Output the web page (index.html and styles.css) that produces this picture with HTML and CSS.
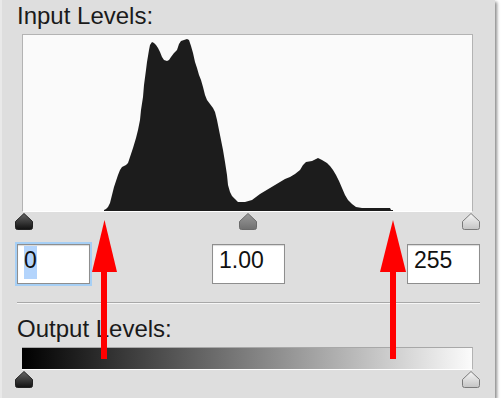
FILE: index.html
```html
<!DOCTYPE html>
<html lang="en">
<head>
  <meta charset="UTF-8">
  <title>Levels</title>
  <link rel="stylesheet" href="styles.css">
</head>
<body>
  <div class="panel">

    <!-- Input levels -->
    <div class="label">Input Levels:</div>
    <div class="histogram">
      <svg width="449" height="176" viewBox="23 35 449 176">
        <polygon class="bars" points="104,211 104,210 106,209 108,207 110,203 112,195 114,187 116,181 118,175 120,170 122,167 126,165 128,163 130,157 133,148 136,138 138,130 140,120 141,110 143,97 144,85 146,70 147,62 149,50 150,45 152,42 154,43 156,45 158,48 160,52 162,57 164,60 167,61 169,60 171,57 174,53 177,50 179,44 181,41 184,40 187,39 189,40 191,46 193,53 195,62 197,68 199,75 201,80 203,87 205,95 207,100 210,104 213,108 215,112 217,120 219,130 221,140 223,150 225,162 227,175 228,185 230,192 232,196 235,199 238,202 245,202 252,200 256,197 260,194 265,191 270,188 275,185 280,182 285,179 290,177 295,174 300,170 303,165 306,162 312,161 318,158 322,160 327,163 330,166 333,170 336,175 339,181 342,188 345,195 348,200 352,204 356,207 362,208 390,208 391,210 393,210 393,211"/>
      </svg>
    </div>

    <div class="track">
      <svg class="handle" width="18" height="17" viewBox="0 0 18 17">
        <defs>
          <linearGradient id="g-black" x1="0" y1="0" x2="0" y2="1">
            <stop offset="0" stop-color="#666"/>
            <stop offset="1" stop-color="#111"/>
          </linearGradient>
        </defs>
        <path d="M9 0.5 L17.5 8.5 V14.5 Q17.5 16.5 15.5 16.5 H2.5 Q0.5 16.5 0.5 14.5 V8.5 Z" fill="url(#g-black)" stroke="#222"/>
      </svg>
      <svg class="handle" width="18" height="17" viewBox="0 0 18 17">
        <defs>
          <linearGradient id="g-gray" x1="0" y1="0" x2="0" y2="1">
            <stop offset="0" stop-color="#9a9a9a"/>
            <stop offset="1" stop-color="#707070"/>
          </linearGradient>
        </defs>
        <path d="M9 0.5 L17.5 8.5 V14.5 Q17.5 16.5 15.5 16.5 H2.5 Q0.5 16.5 0.5 14.5 V8.5 Z" fill="url(#g-gray)" stroke="#6a6a6a"/>
      </svg>
      <svg class="handle" width="18" height="17" viewBox="0 0 18 17">
        <defs>
          <linearGradient id="g-white" x1="0" y1="0" x2="0" y2="1">
            <stop offset="0" stop-color="#f6f6f6"/>
            <stop offset="1" stop-color="#c4c4c4"/>
          </linearGradient>
        </defs>
        <path d="M9 0.5 L17.5 8.5 V14.5 Q17.5 16.5 15.5 16.5 H2.5 Q0.5 16.5 0.5 14.5 V8.5 Z" fill="url(#g-white)" stroke="#7a7a7a"/>
      </svg>
    </div>

    <div class="fields">
      <div class="field focused"><span class="selected">0</span></div>
      <div class="field">1.00</div>
      <div class="field">255</div>
    </div>

    <div class="divider"></div>

    <!-- Output levels -->
    <div class="label output">Output Levels:</div>
    <div class="ramp"></div>

    <div class="track low">
      <svg class="handle" width="18" height="17" viewBox="0 0 18 17">
        <path d="M9 0.5 L17.5 8.5 V14.5 Q17.5 16.5 15.5 16.5 H2.5 Q0.5 16.5 0.5 14.5 V8.5 Z" fill="url(#g-black)" stroke="#222"/>
      </svg>
      <svg class="handle" width="18" height="17" viewBox="0 0 18 17">
        <path d="M9 0.5 L17.5 8.5 V14.5 Q17.5 16.5 15.5 16.5 H2.5 Q0.5 16.5 0.5 14.5 V8.5 Z" fill="url(#g-white)" stroke="#7a7a7a"/>
      </svg>
    </div>

    <!-- Red annotation arrows -->
    <svg class="arrows" width="495" height="398" viewBox="0 0 495 398">
      <polygon points="104.5,220 117,272 92,272"/>
      <rect x="101" y="271" width="6" height="88"/>
      <polygon points="393,220 406,272 380,272"/>
      <rect x="390" y="271" width="6" height="88"/>
    </svg>
  </div>
</body>
</html>
```

FILE: styles.css
```css
* {
  margin: 0;
  padding: 0;
  box-sizing: border-box;
}

body {
  background-color: #fff;
  font-family: "Liberation Sans", Arial, sans-serif;
  color: #1a1a1a;
}

.panel {
  position: relative;
  width: 495px;
  height: 398px;
  padding: 3px 15px 0;
  background-color: #dedede;
  border-left: 2px solid #e9e9e9;
  box-shadow: 2px 2px 3px rgba(0, 0, 0, 0.45);
}

.label {
  font-size: 24px;
  line-height: 26px;
}

/* Histogram */
.histogram {
  margin: 5px 6px 0 5px;
  width: 451px;
  height: 178px;
  background-color: #fafafa;
  border: 1px solid #b3b3b3;
  border-bottom-color: #fff;
}

.histogram svg {
  display: block;
}

.histogram .bars {
  fill: #1c1c1c;
}

/* Slider handles */
.track {
  display: flex;
  justify-content: space-between;
  margin-top: 1px;
  margin-left: -2px;
  height: 17px;
}

.handle {
  display: block;
}

/* Number fields */
.fields {
  display: flex;
  justify-content: space-between;
  margin-top: 14px;
}

.field {
  width: 73px;
  height: 40px;
  padding: 2px 6px 0;
  background-color: #fff;
  border: 1px solid #8e8e8e;
  box-shadow: inset 0 1px 1px rgba(0, 0, 0, 0.15);
  font-size: 23px;
  line-height: 26px;
  color: #111;
}

.field.focused {
  outline: 2px solid #a6cff5;
}

.selected {
  background-color: #b3d4fc;
  padding: 1px 0 6px;
}

.divider {
  margin-top: 18px;
  height: 2px;
  border-top: 1px solid #a8a8a8;
  border-bottom: 1px solid #f6f6f6;
}

.label.output {
  margin-top: 12px;
}

/* Output gradient */
.ramp {
  margin: 5px 6px 0 5px;
  width: 451px;
  height: 23px;
  border-top: 1px solid #a8a8a8;
  border-right: 1px solid #b3b3b3;
  border-bottom: 1px solid #fff;
  background: linear-gradient(to right, #000 0%, #fbfbfb 100%);
}

.track.low {
  margin-top: 1px;
}

/* Annotation */
.arrows {
  position: absolute;
  top: 0;
  left: -2px;
  fill: #ff0000;
}
```
